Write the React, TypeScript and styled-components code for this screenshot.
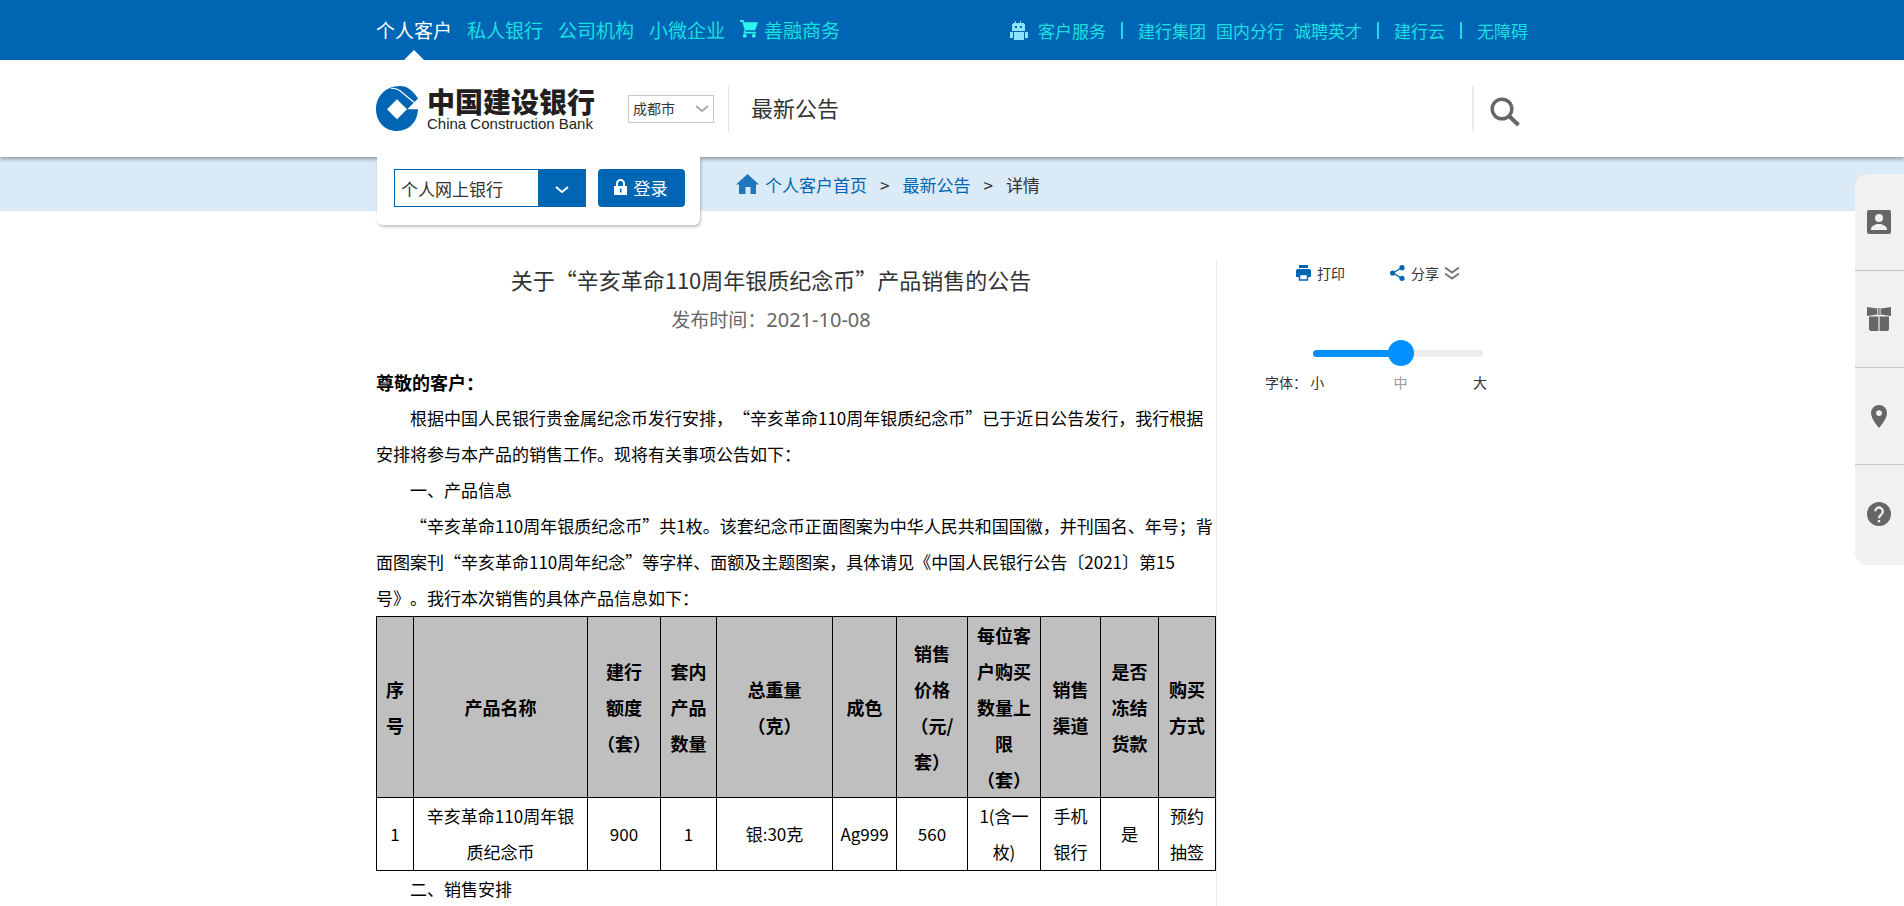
import React, { useState } from "react";
import styled, { createGlobalStyle, css } from "styled-components";

const sans = `"Noto Sans CJK SC", "Noto Sans", sans-serif`;
const blue = "#0066b3";
const cyan = "#1adfe0";

const GlobalStyle = createGlobalStyle`
  *, *::before, *::after { box-sizing: border-box; }
  body {
    margin: 0;
    background: #fff;
    color: #333;
    font-family: ${sans};
    font-size: 17px;
    font-weight: 400;
    text-spacing-trim: space-all;
  }
  a { color: inherit; text-decoration: none; }
  h1, h2, p { margin: 0; font-weight: inherit; }
  button, select, input { font: inherit; color: inherit; margin: 0; }
  svg { display: block; flex: none; }
`;

const Container = styled.div`
  width: 100%;
  max-width: 1152px;
  margin: 0 auto;
`;

const TopBar = styled.div`
  background: ${blue};
  color: ${cyan};
`;

const TopBarInner = styled(Container)`
  display: flex;
  justify-content: space-between;
  height: 60px;
`;

const MainNav = styled.nav`
  display: flex;
  gap: 15px;
  font-size: 19px;
`;

const MainLink = styled.a<{ $active?: boolean }>`
  position: relative;
  display: flex;
  align-items: center;
  gap: 6px;
  padding-bottom: 2px;
  white-space: nowrap;
  ${(p) =>
    p.$active &&
    css`
      color: #fff;
      &::after {
        content: "";
        position: absolute;
        left: 50%;
        bottom: 0;
        margin-left: -10px;
        border: 10px solid transparent;
        border-top: 0;
        border-bottom-color: #fff;
      }
    `}
`;

const SubNav = styled.nav`
  display: flex;
  align-items: center;
  gap: 10px;
  white-space: nowrap;
`;

const SubLink = styled.a`
  display: flex;
  align-items: center;
  gap: 10px;
`;

const Bar = styled.span`
  width: 2px;
  height: 17px;
  margin: 0 5px;
  background: ${cyan};
`;

const Header = styled.header`
  position: relative;
  z-index: 1;
  background: #fff;
  box-shadow: 0 2px 4px rgba(0, 0, 0, 0.35);
`;

const HeaderInner = styled(Container)`
  display: flex;
  align-items: center;
  height: 97px;
`;

const Logo = styled.a`
  display: flex;
  align-items: center;
  gap: 9px;
  width: 240px;
  color: #231f20;
  white-space: nowrap;
`;

const LogoText = styled.span`
  display: flex;
  flex-direction: column;
`;

const LogoName = styled.strong`
  font-size: 28px;
  font-weight: 900;
  line-height: 30px;
`;

const LogoLatin = styled.span`
  font: 15px/16px "Liberation Sans", sans-serif;
`;

const SelectWrap = styled.div`
  display: grid;
  align-items: center;
  & > * { grid-area: 1 / 1; }
  & > svg { justify-self: end; pointer-events: none; }
`;

const CityWrap = styled(SelectWrap)`
  margin-left: 12px;
  & > svg { margin-right: 5px; }
`;

const CitySelect = styled.select`
  appearance: none;
  width: 86px;
  height: 28px;
  padding: 0 4px 2px;
  border: 1px solid #c8c8c8;
  border-radius: 0;
  background: #fff;
  font-size: 14px;
`;

const SectionName = styled.h2`
  display: flex;
  align-items: center;
  height: 46px;
  margin-left: 14px;
  padding: 0 0 4px 22px;
  border-left: 1px solid #e5e5e5;
  font-size: 22px;
`;

const SearchButton = styled.button`
  display: flex;
  align-items: center;
  height: 45px;
  margin-left: auto;
  padding: 6px 7px 0 16px;
  border: 0;
  border-left: 2px solid #ececec;
  background: none;
`;

const CrumbBand = styled.div`
  height: 54px;
  background: #daeaf7;
`;

const CrumbInner = styled(Container)`
  display: flex;
  align-items: flex-start;
`;

const LoginCard = styled.form`
  position: relative;
  z-index: 2;
  display: flex;
  gap: 12px;
  width: 323px;
  height: 68px;
  margin-left: 1px;
  padding: 12px 15px 18px 17px;
  border-radius: 0 0 6px 6px;
  background: #fff;
  box-shadow: 1px 2px 3px rgba(0, 0, 0, 0.25);
  clip-path: inset(0 -6px -6px -6px);
`;

const BankWrap = styled(SelectWrap)`
  flex: 1;
`;

const BankSelect = styled.select`
  appearance: none;
  width: 100%;
  height: 38px;
  padding: 0 48px 0 6px;
  border: 1px solid ${blue};
  border-radius: 0;
  background: #fff;
`;

const BankArrow = styled.span`
  display: flex;
  align-items: center;
  justify-content: center;
  justify-self: end;
  width: 48px;
  height: 38px;
  padding-top: 4px;
  background: ${blue};
  pointer-events: none;
`;

const LoginButton = styled.button`
  display: flex;
  align-items: center;
  justify-content: center;
  gap: 7px;
  width: 87px;
  height: 38px;
  padding: 0 2px 2px 0;
  border: 0;
  border-radius: 4px;
  background: ${blue};
  color: #fff;
`;

const Crumbs = styled.nav`
  display: flex;
  align-items: center;
  gap: 13px;
  height: 54px;
  margin-left: 36px;
  a {
    display: flex;
    align-items: center;
    gap: 6px;
    color: ${blue};
  }
`;

const Columns = styled(Container)`
  display: flex;
  align-items: stretch;
  padding-top: 48px;
`;

const Article = styled.article`
  flex: 1;
  min-width: 0;
  border-right: 1px solid #eee;
`;

const Heading = styled.header`
  padding: 2px 50px 22px 0;
  text-align: center;
`;

const Title = styled.h1`
  font-size: 22px;
  line-height: 36px;
`;

const Published = styled.p`
  padding: 4px 0;
  color: #666;
  font-size: 19px;
  line-height: 36px;
  time { font-family: "Noto Sans", sans-serif; font-size: 20px; }
`;

const bodyText = css`
  color: #000;
  font-size: 17px;
  line-height: 36px;
`;

const Greeting = styled.p`
  ${bodyText}
  font-size: 18px;
  font-weight: 700;
`;

const Paragraph = styled.p`
  ${bodyText}
  text-indent: 2em;
`;

const DataTable = styled.table`
  ${bodyText}
  width: 100%;
  table-layout: fixed;
  border-collapse: collapse;
  text-align: center;
  th, td { padding: 0; border: 1px solid #000; white-space: nowrap; }
  th { background: #bfbfbf; font-size: 18px; font-weight: 700; }
`;

const Aside = styled.aside`
  width: 311px;
  padding-left: 48px;
  font-size: 14px;
  line-height: 20px;
`;

const Tools = styled.div`
  display: flex;
  gap: 45px;
  padding: 4px 0 0 31px;
`;

const ToolButton = styled.button`
  display: flex;
  align-items: center;
  gap: 6px;
  padding: 0;
  border: 0;
  background: none;
`;

const FontSizer = styled.div`
  width: 222px;
  margin-top: 57px;
`;

const Range = styled.input<{ $fill: number }>`
  appearance: none;
  display: block;
  width: 170px;
  height: 26px;
  margin-left: 48px;
  background: none;
  &::-webkit-slider-runnable-track {
    height: 7px;
    border-radius: 4px;
    background: linear-gradient(to right, #0090ff ${(p) => p.$fill}%, #ececec ${(p) => p.$fill}%);
  }
  &::-webkit-slider-thumb {
    appearance: none;
    width: 26px;
    height: 26px;
    margin-top: -10px;
    border-radius: 50%;
    background: #0090ff;
  }
`;

const SizeLabels = styled.div`
  display: flex;
  justify-content: space-between;
  margin-top: 6px;
`;

const SizeMid = styled.span`
  margin-left: 4px;
  color: #999;
`;

const SideDock = styled.nav`
  position: fixed;
  z-index: 3;
  top: 174px;
  right: 0;
  display: flex;
  flex-direction: column;
  width: 49px;
  border-radius: 12px 0 0 12px;
  background: #f1f1f1;
`;

const DockLink = styled.a`
  display: flex;
  align-items: center;
  justify-content: center;
  height: 97px;
  padding-right: 1px;
  border-bottom: 1px solid #c8c8c8;
  &:last-child { height: 100px; padding-bottom: 2px; border-bottom: 0; }
`;

const CartIcon = () => (
  <svg width="18" height="18" viewBox="0 0 18 18" fill="#2ff5f0">
    <path d="M0 0h3.400l1 2.200H18l-3 8H6l-.8 1.600H16v1.700H3.400l1.300-3.400L2.400 1.900H0z" />
    <rect x="3" y="14" width="3.600" height="3.600" rx="1.400" />
    <rect x="12" y="14" width="3.600" height="3.600" rx="1.400" />
  </svg>
);

const RobotIcon = () => (
  <svg width="18" height="19" viewBox="0 0 18 19" fill="#8fe3ff">
    <path d="M5 0h1v2h4V0h1v2h3v1h1v7H2V3h1V2h2zM5 5v2h2V5zm5 0v2h2V5z" fillRule="evenodd" />
    <path d="M4 11h10v8H4zM0 11h3v6H0zM15 11h3v6h-3z" />
  </svg>
);

const LogoMark = () => (
  <svg width="42" height="45" viewBox="0 0 42 45">
    <path
      fill={blue}
      fillRule="evenodd"
      d="M42 23.300H31.300L42 12.600C37 4.500 31 0 24 0 9 0 0 11 0 23c0 13 9 22 21 22s20.500-9 21-21.700zM21 13.300l10 10-10 10-10-10z"
    />
    <path d="M15 2.500c4-.6 6.500.2 9 2.300l14.500 12" fill="none" stroke="#fff" strokeWidth="1.200" />
  </svg>
);

const Chevron = ({ color, width = 14 }: { color: string; width?: number }) => (
  <svg width={width} height="8" viewBox="0 0 14 8" fill="none" stroke={color} strokeWidth="2">
    <path d="M1 1l6 5 6-5" />
  </svg>
);

const SearchIcon = () => (
  <svg width="31" height="30" viewBox="0 0 31 30" fill="none" stroke="#666" strokeWidth="3.400">
    <circle cx="12" cy="12" r="9.800" />
    <path d="M18.500 18.500l10 9.500" strokeWidth="4" />
  </svg>
);

const LockIcon = () => (
  <svg width="13" height="16" viewBox="0 0 13 16">
    <path d="M3 8V4.500a3.500 3.500 0 0 1 7 0V8" fill="none" stroke="#fff" strokeWidth="2" />
    <path fill="#fff" fillRule="evenodd" d="M0 7h13v9H0zM6 9.500v4h1.500v-4z" />
  </svg>
);

const HomeIcon = () => (
  <svg width="23" height="20" viewBox="0 0 23 20" fill="#1f78bf">
    <path d="M11.500 0L23 10.500h-3V20h-5.500v-7h-5v7H3v-9.500H0z" />
  </svg>
);

const PrintIcon = () => (
  <svg width="15" height="16" viewBox="0 0 15 16">
    <path fill={blue} d="M3 0h9v3H3zM2 4h11a2 2 0 0 1 2 2v6h-3V9H3v3H0V6a2 2 0 0 1 2-2z" />
    <path fill="none" stroke={blue} strokeWidth="1.500" d="M3.500 9.500h8v5.500h-8z" />
  </svg>
);

const ShareIcon = () => (
  <svg width="15" height="16" viewBox="0 0 15 16" fill={blue}>
    <path d="M12 2.500L3 8l9 5.500" fill="none" stroke={blue} strokeWidth="1.400" />
    <circle cx="12" cy="2.700" r="2.600" />
    <circle cx="2.600" cy="8" r="2.600" />
    <circle cx="12" cy="13.300" r="2.600" />
  </svg>
);

const DoubleChevron = () => (
  <svg width="14" height="15" viewBox="0 0 14 15" fill="none" stroke="#777" strokeWidth="2">
    <path d="M0 1.500l7 5 7-5M0 7.500l7 5 7-5" />
  </svg>
);

const UserIcon = () => (
  <svg width="24" height="24" viewBox="0 0 24 24">
    <path
      fill="#666"
      fillRule="evenodd"
      d="M2 0h20a2 2 0 0 1 2 2v20a2 2 0 0 1-2 2H2a2 2 0 0 1-2-2V2a2 2 0 0 1 2-2zm10 4a4 4 0 1 0 0 8 4 4 0 0 0 0-8zM4 20h16v-1c0-3-5-5-8-5s-8 2-8 5z"
    />
  </svg>
);

const GiftIcon = () => (
  <svg width="24" height="24" viewBox="0 0 24 24" fill="#666">
    <path d="M0 0l10 1.500v6L0 9zM24 0l-10 1.500v6L24 9zM10.700 1h1v7h-1zM12.400 1h1v7h-1z" />
    <path d="M2 9.500h9V24H4a2 2 0 0 1-2-2zM13 9.500h9V22a2 2 0 0 1-2 2h-7z" />
    <path d="M11 9.500h2V24h-2z" fill="#bbb" />
  </svg>
);

const PinIcon = () => (
  <svg width="16" height="23" viewBox="0 0 16 23">
    <path
      fill="#666"
      fillRule="evenodd"
      d="M8 0a8 8 0 0 0-8 8c0 6 8 15 8 15s8-9 8-15a8 8 0 0 0-8-8zm0 5.200a2.900 2.900 0 1 1 0 5.800 2.900 2.900 0 0 1 0-5.800z"
    />
  </svg>
);

const HelpIcon = () => (
  <svg width="24" height="24" viewBox="0 0 24 24">
    <circle cx="12" cy="12" r="12" fill="#666" />
    <path d="M8.200 9.300a3.800 3.800 0 1 1 6.200 3c-1.600 1.200-2.400 1.900-2.400 4" fill="none" stroke="#f1f1f1" strokeWidth="2.300" />
    <rect x="10.800" y="18" width="2.400" height="2.400" fill="#f1f1f1" />
  </svg>
);

const columns: { width: number; lines: string[] }[] = [
  { width: 37, lines: ["序", "号"] },
  { width: 174, lines: ["产品名称"] },
  { width: 73, lines: ["建行", "额度", "（套）"] },
  { width: 56, lines: ["套内", "产品", "数量"] },
  { width: 116, lines: ["总重量", "（克）"] },
  { width: 64, lines: ["成色"] },
  { width: 71, lines: ["销售", "价格", "（元/", "套）"] },
  { width: 73, lines: ["每位客", "户购买", "数量上", "限", "（套）"] },
  { width: 60, lines: ["销售", "渠道"] },
  { width: 58, lines: ["是否", "冻结", "货款"] },
  { width: 57, lines: ["购买", "方式"] },
];

const row: string[][] = [
  ["1"],
  ["辛亥革命110周年银", "质纪念币"],
  ["900"],
  ["1"],
  ["银:30克"],
  ["Ag999"],
  ["560"],
  ["1(含一", "枚)"],
  ["手机", "银行"],
  ["是"],
  ["预约", "抽签"],
];

const Lines = ({ lines }: { lines: string[] }) => (
  <>
    {lines.map((line, i) => (
      <React.Fragment key={i}>
        {i > 0 && <br />}
        {line}
      </React.Fragment>
    ))}
  </>
);

export default function App() {
  const [size, setSize] = useState(52);
  return (
    <>
      <GlobalStyle />
      <TopBar>
        <TopBarInner>
          <MainNav aria-label="客户类型">
            <MainLink href="#" $active>个人客户</MainLink>
            <MainLink href="#">私人银行</MainLink>
            <MainLink href="#">公司机构</MainLink>
            <MainLink href="#">小微企业</MainLink>
            <MainLink href="#"><CartIcon />善融商务</MainLink>
          </MainNav>
          <SubNav aria-label="服务">
            <SubLink href="#"><RobotIcon />客户服务</SubLink>
            <Bar />
            <SubLink href="#">建行集团</SubLink>
            <SubLink href="#">国内分行</SubLink>
            <SubLink href="#">诚聘英才</SubLink>
            <Bar />
            <SubLink href="#">建行云</SubLink>
            <Bar />
            <SubLink href="#">无障碍</SubLink>
          </SubNav>
        </TopBarInner>
      </TopBar>
      <Header>
        <HeaderInner>
          <Logo href="#">
            <LogoMark />
            <LogoText>
              <LogoName>中国建设银行</LogoName>
              <LogoLatin>China Construction Bank</LogoLatin>
            </LogoText>
          </Logo>
          <CityWrap>
            <CitySelect aria-label="城市">
              <option>成都市</option>
            </CitySelect>
            <Chevron color="#aaa" />
          </CityWrap>
          <SectionName>最新公告</SectionName>
          <SearchButton aria-label="搜索"><SearchIcon /></SearchButton>
        </HeaderInner>
      </Header>
      <CrumbBand>
        <CrumbInner>
          <LoginCard>
            <BankWrap>
              <BankSelect aria-label="网上银行">
                <option>个人网上银行</option>
              </BankSelect>
              <BankArrow><Chevron color="#fff" width={16} /></BankArrow>
            </BankWrap>
            <LoginButton type="button"><LockIcon />登录</LoginButton>
          </LoginCard>
          <Crumbs aria-label="当前位置">
            <a href="#"><HomeIcon />个人客户首页</a>
            <span>&gt;</span>
            <a href="#">最新公告</a>
            <span>&gt;</span>
            <span>详情</span>
          </Crumbs>
        </CrumbInner>
      </CrumbBand>
      <Columns as="main">
        <Article>
          <Heading>
            <Title>关于“辛亥革命110周年银质纪念币”产品销售的公告</Title>
            <Published>发布时间：<time dateTime="2021-10-08">2021-10-08</time></Published>
          </Heading>
          <Greeting>尊敬的客户：</Greeting>
          <Paragraph>
            根据中国人民银行贵金属纪念币发行安排，“辛亥革命110周年银质纪念币”已于近日公告发行，我行根据安排将参与本产品的销售工作。现将有关事项公告如下：
          </Paragraph>
          <Paragraph>一、产品信息</Paragraph>
          <Paragraph>
            “辛亥革命110周年银质纪念币”共1枚。该套纪念币正面图案为中华人民共和国国徽，并刊国名、年号；背面图案刊“辛亥革命110周年纪念”等字样、面额及主题图案，具体请见《中国人民银行公告〔2021〕第15号》。我行本次销售的具体产品信息如下：
          </Paragraph>
          <DataTable>
            <colgroup>
              {columns.map((c, i) => <col key={i} width={c.width} />)}
            </colgroup>
            <thead>
              <tr>
                {columns.map((c, i) => <th key={i} scope="col"><Lines lines={c.lines} /></th>)}
              </tr>
            </thead>
            <tbody>
              <tr>
                {row.map((lines, i) => <td key={i}><Lines lines={lines} /></td>)}
              </tr>
            </tbody>
          </DataTable>
          <Paragraph>二、销售安排</Paragraph>
        </Article>
        <Aside>
          <Tools>
            <ToolButton type="button"><PrintIcon />打印</ToolButton>
            <ToolButton type="button"><ShareIcon />分享<DoubleChevron /></ToolButton>
          </Tools>
          <FontSizer>
            <Range
              type="range"
              aria-label="字体"
              min={0}
              max={100}
              value={size}
              $fill={size}
              onChange={(e) => setSize(Number(e.target.value))}
            />
            <SizeLabels>
              <span>字体： 小</span>
              <SizeMid>中</SizeMid>
              <span>大</span>
            </SizeLabels>
          </FontSizer>
        </Aside>
      </Columns>
      <SideDock aria-label="快捷入口">
        <DockLink href="#" aria-label="我的账户"><UserIcon /></DockLink>
        <DockLink href="#" aria-label="优惠活动"><GiftIcon /></DockLink>
        <DockLink href="#" aria-label="网点查询"><PinIcon /></DockLink>
        <DockLink href="#" aria-label="帮助"><HelpIcon /></DockLink>
      </SideDock>
    </>
  );
}
